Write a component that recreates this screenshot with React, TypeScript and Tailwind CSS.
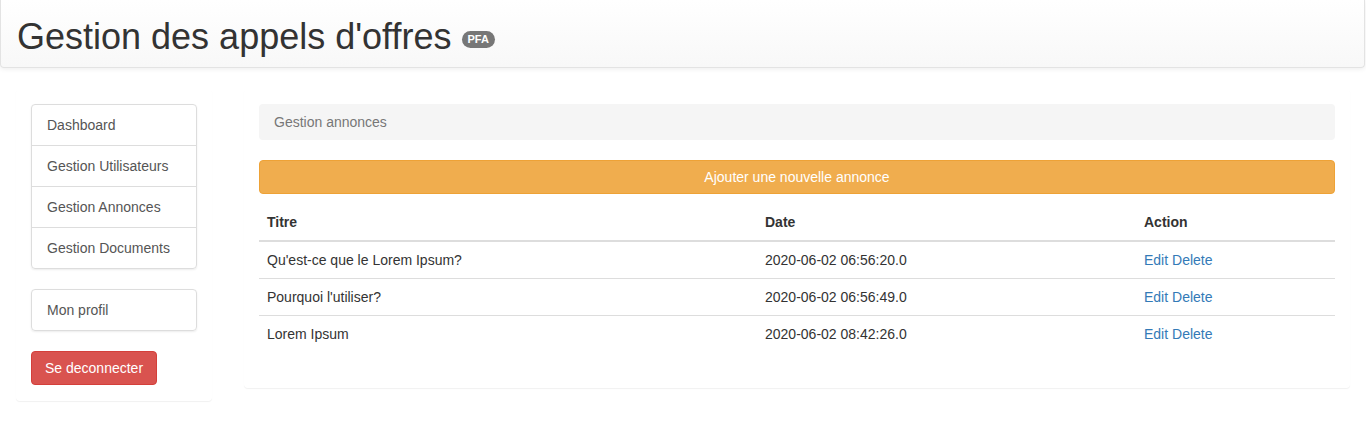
const rows = [
  { title: "Qu'est-ce que le Lorem Ipsum?", date: '2020-06-02 06:56:20.0' },
  { title: "Pourquoi l'utiliser?", date: '2020-06-02 06:56:49.0' },
  { title: 'Lorem Ipsum', date: '2020-06-02 08:42:26.0' },
];

const menu = ['Dashboard', 'Gestion Utilisateurs', 'Gestion Annonces', 'Gestion Documents'];

export default function App() {
  return (
    <div className="min-h-[442px] bg-white text-[14px] text-[#333] font-['Liberation_Sans',Arial,sans-serif]">
      {/* Header */}
      <div className="mr-px h-[68px] rounded-b-[4px] border border-t-0 border-[#e3e3e3] bg-gradient-to-b from-white to-[#f8f8f8] shadow-[0_1px_5px_rgba(0,0,0,0.075)] pl-[16px] pt-[17px]">
        <h1 className="text-[36px] leading-[40px] text-[#333]">
          Gestion des appels d'offres{' '}
          <span className="inline-block align-middle rounded-[10px] bg-[#777] px-[6px] py-[3px] text-[11px] font-bold leading-none text-white">
            PFA
          </span>
        </h1>
      </div>

      <div className="flex items-start px-[16px] pt-[21px]">
        {/* Sidebar */}
        <div className="w-[196px] shrink-0 rounded-[4px] bg-white p-[15px] pb-[16px] shadow-[0_1px_1px_rgba(0,0,0,0.06)]">
          <div className="rounded-[4px] border border-[#ddd] shadow-[0_1px_2px_rgba(0,0,0,0.075)]">
            {menu.map((m, i) => (
              <div
                key={m}
                className={`px-[15px] py-[10px] leading-[20px] text-[#555] ${i > 0 ? 'border-t border-[#ddd]' : ''}`}
              >
                {m}
              </div>
            ))}
          </div>
          <div className="mt-[20px] rounded-[4px] border border-[#ddd] px-[15px] py-[10px] leading-[20px] text-[#555] shadow-[0_1px_2px_rgba(0,0,0,0.075)]">
            Mon profil
          </div>
          <button className="mt-[20px] rounded-[4px] border border-[#d43f3a] bg-[#d9534f] px-[13px] py-[6px] leading-[20px] text-white">
            Se deconnecter
          </button>
        </div>

        {/* Main */}
        <div className="ml-[32px] flex-1 rounded-[4px] bg-white p-[15px] pb-[16px] shadow-[0_1px_1px_rgba(0,0,0,0.06)]">
          <div className="rounded-[4px] bg-[#f5f5f5] px-[15px] py-[8px] leading-[20px] text-[#777]">
            Gestion annonces
          </div>
          <button className="mt-[20px] block w-full rounded-[4px] border border-[#eea236] bg-[#f0ad4e] px-[12px] py-[6px] leading-[20px] text-white">
            Ajouter une nouvelle annonce
          </button>
          <table className="mt-[10px] mb-[20px] w-full border-collapse">
            <thead>
              <tr className="border-b-2 border-[#ddd]">
                <th className="w-[498px] p-[8px] text-left font-bold leading-[20px]">Titre</th>
                <th className="w-[379px] p-[8px] text-left font-bold leading-[20px]">Date</th>
                <th className="p-[8px] text-left font-bold leading-[20px]">Action</th>
              </tr>
            </thead>
            <tbody>
              {rows.map((r, i) => (
                <tr key={r.date} className={i > 0 ? 'border-t border-[#ddd]' : ''}>
                  <td className="p-[8px] leading-[20px]">{r.title}</td>
                  <td className="p-[8px] leading-[20px]">{r.date}</td>
                  <td className="p-[8px] leading-[20px] text-[#337ab7]">
                    <a href="#">Edit</a> <a href="#">Delete</a>
                  </td>
                </tr>
              ))}
            </tbody>
          </table>
        </div>
      </div>
    </div>
  );
}
